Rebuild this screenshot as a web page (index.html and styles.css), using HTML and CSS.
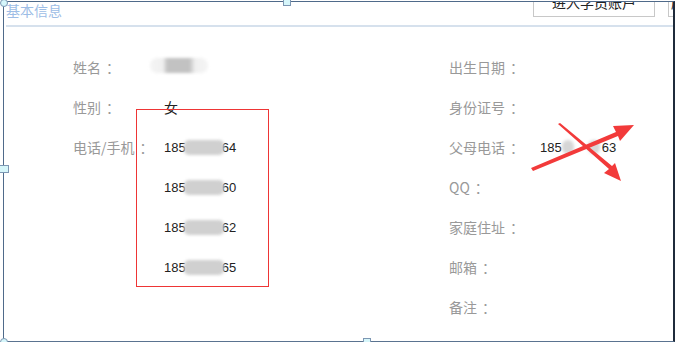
FILE: index.html
```html
<!DOCTYPE html>
<html lang="zh-CN">

<head>
    <meta charset="UTF-8">
    <title>基本信息</title>
    <link rel="stylesheet" href="styles.css">
</head>

<body>
    <div class="frame">
        <div class="header">
            <span class="title">基本信息</span>
            <div class="actions">
                <button class="btn">进入学员账户</button>
                <button class="btn btn-cut">刷新</button>
            </div>
        </div>

        <div class="info">
            <!-- left column -->
            <div class="col">
                <div class="row">
                    <span class="label">姓名<span class="colon">：</span></span>
                    <span class="value"><span class="blur blur-name"></span></span>
                </div>
                <div class="row">
                    <span class="label">性别<span class="colon">：</span></span>
                    <span class="value">女</span>
                </div>
                <div class="row multi">
                    <span class="label">电话/手机<span class="colon">：</span></span>
                    <div class="phones">
                        <div class="phone">185<span class="blur blur-phone"></span>64</div>
                        <div class="phone">185<span class="blur blur-phone"></span>60</div>
                        <div class="phone">185<span class="blur blur-phone"></span>62</div>
                        <div class="phone">185<span class="blur blur-phone"></span>65</div>
                    </div>
                </div>
                <div class="mark-box"></div>
            </div>

            <!-- right column -->
            <div class="col">
                <div class="row"><span class="label">出生日期<span class="colon">：</span></span></div>
                <div class="row"><span class="label">身份证号<span class="colon">：</span></span></div>
                <div class="row">
                    <span class="label">父母电话<span class="colon">：</span></span>
                    <span class="phone">185<span class="blur blur-dot"></span><span class="blur blur-dot"></span>63</span>
                </div>
                <div class="row"><span class="label">QQ<span class="colon">：</span></span></div>
                <div class="row"><span class="label">家庭住址<span class="colon">：</span></span></div>
                <div class="row"><span class="label">邮箱<span class="colon">：</span></span></div>
                <div class="row"><span class="label">备注<span class="colon">：</span></span></div>

                <svg class="mark-arrows" width="120" height="70" viewBox="0 0 120 70">
                    <!-- arrow up-right -->
                    <polygon points="0,45 85,9 82,3 103,2 89,18 87,13 2,48" fill="#f23a3a" />
                    <!-- arrow down-right -->
                    <polygon points="27,1 78,46 73,50 90,58 84,40 81,43 29,0" fill="#f23a3a" />
                </svg>
            </div>
        </div>

        <!-- selection handles -->
        <span class="handle round h-tl"></span>
        <span class="handle round h-bl"></span>
        <span class="handle h-tm"></span>
        <span class="handle h-lm"></span>
        <span class="handle h-bm"></span>
    </div>
</body>

</html>
```

FILE: styles.css
```css
body {
    margin: 0;
    background-color: #fff;
    font-family: "Noto Sans CJK SC", "Microsoft YaHei", sans-serif;
    overflow: hidden;
}

.frame {
    position: relative;
    margin: 1px 0 0 3px;
    width: 669px;
    height: 339px;
    border-top: 1px solid #4f6a8a;
    border-left: 1px solid #4f6a8a;
    border-bottom: 1px solid #5a7390;
    border-right: 2px solid #1f2b3b;
}

.header {
    display: flex;
    justify-content: space-between;
    margin-left: 2px;
    height: 23px;
    border-bottom: 2px solid #d6e1ed;
}

.title {
    font-size: 14px;
    line-height: 16px;
    color: #9dbde6;
}

.actions {
    display: flex;
    align-items: flex-start;
    width: 140px;
    overflow: hidden;
    white-space: nowrap;
}

.btn {
    flex-shrink: 0;
    margin-top: -15px;
    height: 30px;
    width: 122px;
    padding: 0;
    border: 1px solid #c8c8c8;
    background: #fff;
    font-family: "Noto Sans CJK SC", sans-serif;
    font-size: 14px;
    line-height: 14px;
    color: #222;
}

.btn-cut {
    width: 40px;
    margin-left: 13px;
    text-align: left;
    padding-left: 2px;
}

.info {
    display: grid;
    grid-template-columns: 376px 1fr;
    padding: 20px 0 0 69px;
}

.col {
    position: relative;
}

.row {
    display: flex;
    align-items: center;
    height: 40px;
    font-size: 14px;
}

.row.multi {
    align-items: flex-start;
    height: auto;
}

.row.multi .label {
    line-height: 40px;
}

.label {
    width: 91px;
    color: #999;
}

.colon {
    margin-left: 5px;
}

.value {
    color: #222;
}

.phones {
    display: flex;
    flex-direction: column;
}

.phone {
    display: flex;
    align-items: center;
    height: 40px;
    font-family: "Liberation Sans", Arial, sans-serif;
    font-size: 13px;
    color: #222;
}

.blur {
    display: inline-block;
    background: #d2d2d2;
    filter: blur(1.5px);
}

.blur-name {
    width: 58px;
    height: 15px;
    margin-left: -14px;
    border-radius: 7px;
    background: linear-gradient(90deg, #f4f4f4 0%, #f0f0f0 22%, #c2c2c2 30%, #c2c2c2 68%, #f0f0f0 78%, #f4f4f4 100%);
}

.blur-phone {
    width: 40px;
    height: 15px;
    margin: 0 -2px 0 -2px;
    border-radius: 5px;
    background: #d0d0d0;
}

.blur-dot {
    width: 12px;
    height: 14px;
    border-radius: 7px;
    margin-right: 14px;
    background: #d6d6d6;
}

.blur-dot:last-of-type {
    margin-right: 2px;
}

/* annotations */
.mark-box {
    position: absolute;
    left: 63px;
    top: 62px;
    width: 131px;
    height: 176px;
    border: 1px solid #ee3535;
}

.mark-arrows {
    position: absolute;
    left: 82px;
    top: 76px;
}

.handle {
    position: absolute;
    width: 6px;
    height: 6px;
    background: #d6f6fa;
    border: 1px solid #7d97b3;
}

.handle.round {
    border-radius: 50%;
}

.h-tl {
    left: -4px;
    top: -3px;
}

.h-bl {
    left: -4px;
    bottom: -5px;
}

.h-tm {
    left: 279px;
    top: -4px;
}

.h-lm {
    left: -5px;
    top: 163px;
    height: 6px;
    width: 8px;
}

.h-bm {
    left: 359px;
    bottom: -5px;
}
```
